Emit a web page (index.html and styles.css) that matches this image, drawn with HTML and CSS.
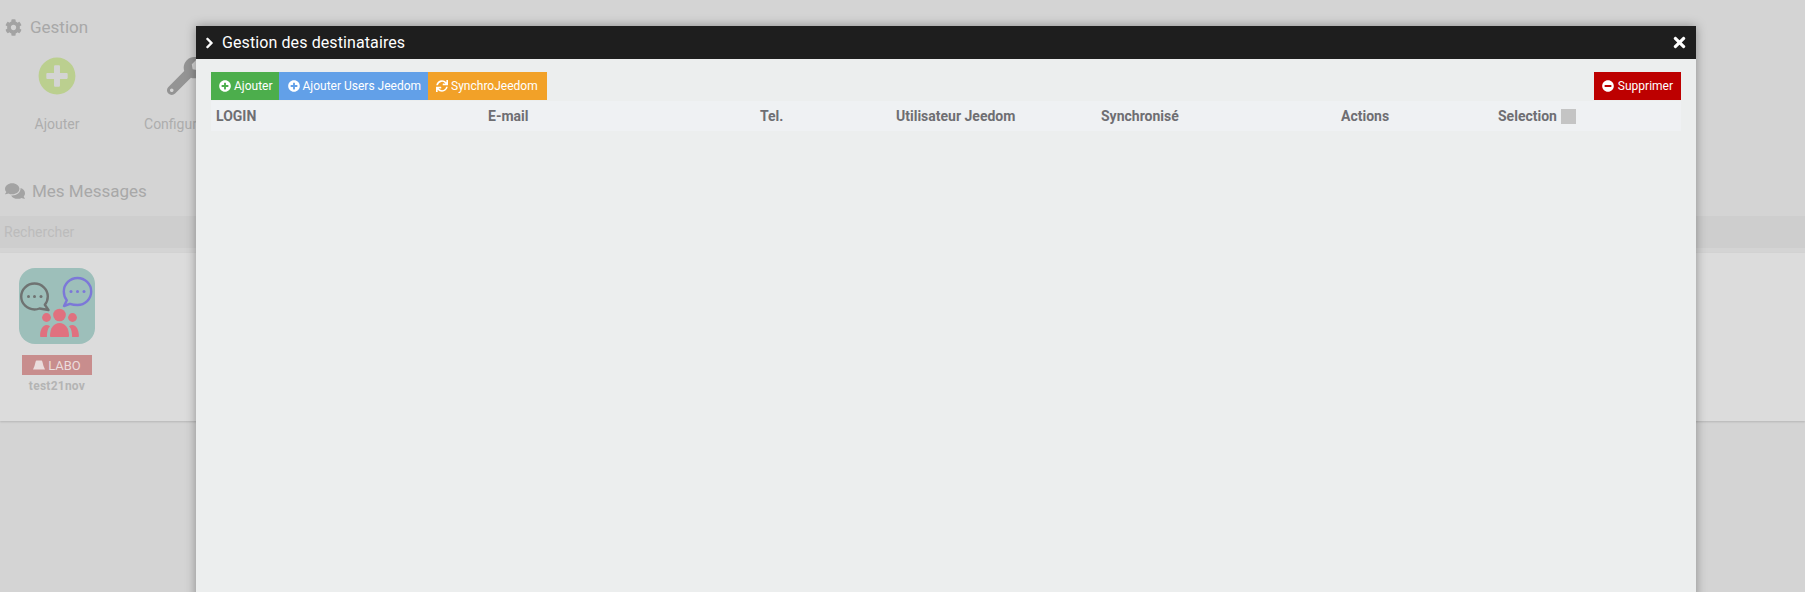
FILE: index.html
```html
<!DOCTYPE html>
<html lang="fr">
<head>
<meta charset="utf-8">
<title>Gestion des destinataires</title>
<link rel="stylesheet" href="styles.css">
</head>
<body>
<main class="page">
  <h3 class="section-title title-gestion">
    <svg class="ico ico-gear" viewBox="0 0 512 512"><path d="M487.4 315.7l-42.6-24.6c4.3-23.2 4.3-47 0-70.2l42.6-24.6c4.9-2.8 7.1-8.6 5.5-14-11.1-35.6-30-67.8-54.7-94.6-3.8-4.1-10-5.1-14.8-2.3L380.8 110c-17.9-15.4-38.5-27.3-60.8-35.1V25.8c0-5.6-3.9-10.5-9.4-11.7-36.7-8.2-74.3-7.8-109.2 0-5.5 1.2-9.4 6.1-9.4 11.7V75c-22.2 7.9-42.8 19.8-60.8 35.1L88.7 85.5c-4.9-2.8-11-1.9-14.8 2.3-24.7 26.7-43.6 58.9-54.7 94.6-1.7 5.4.6 11.2 5.5 14L67.3 221c-4.3 23.2-4.3 47 0 70.2l-42.6 24.6c-4.9 2.8-7.1 8.6-5.5 14 11.1 35.6 30 67.8 54.7 94.6 3.8 4.1 10 5.1 14.8 2.3l42.6-24.6c17.9 15.4 38.5 27.3 60.8 35.1v49.2c0 5.6 3.9 10.5 9.4 11.7 36.7 8.2 74.3 7.8 109.2 0 5.5-1.2 9.4-6.1 9.4-11.7v-49.2c22.2-7.9 42.8-19.8 60.8-35.1l42.6 24.6c4.9 2.8 11 1.9 14.8-2.3 24.7-26.7 43.6-58.9 54.7-94.6 1.5-5.5-.7-11.3-5.6-14.1zM256 336c-44.1 0-80-35.9-80-80s35.9-80 80-80 80 35.9 80 80-35.9 80-80 80z"/></svg>
    Gestion
  </h3>
  <div class="actions">
    <div class="action action-add">
      <svg class="action-icon icon-add" viewBox="0 0 512 512"><path d="M256 8C119 8 8 119 8 256s111 248 248 248 248-111 248-248S393 8 256 8zm144 276c0 6.600-5.400 12-12 12h-92v92c0 6.600-5.400 12-12 12h-56c-6.600 0-12-5.400-12-12v-92h-92c-6.600 0-12-5.400-12-12v-56c0-6.600 5.400-12 12-12h92v-92c0-6.600 5.400-12 12-12h56c6.600 0 12 5.400 12 12v92h92c6.600 0 12 5.400 12 12v56z"/></svg>
      <span>Ajouter</span>
    </div>
    <div class="action action-config">
      <svg class="action-icon icon-config" viewBox="0 0 512 512"><path d="M507.73 109.1c-2.24-9.03-13.54-12.09-20.12-5.51l-74.36 74.36-67.88-11.31-11.31-67.88 74.36-74.36c6.62-6.62 3.43-17.9-5.66-20.16-47.38-11.74-99.55.91-136.58 37.93-39.64 39.64-50.55 97.1-34.05 147.2L18.74 402.76c-24.99 24.99-24.99 65.51 0 90.5 24.99 24.99 65.51 24.99 90.5 0l213.21-213.21c50.12 16.71 107.47 5.68 147.37-34.22 37.07-37.07 49.7-89.32 37.91-136.73zM64 472c-13.25 0-24-10.75-24-24 0-13.26 10.75-24 24-24s24 10.74 24 24c0 13.25-10.75 24-24 24z"/></svg>
      <span>Configuration</span>
    </div>
  </div>
  <h3 class="section-title title-messages">
    <svg class="ico ico-comments" viewBox="0 0 576 512"><path d="M416 192c0-88.4-93.1-160-208-160S0 103.6 0 192c0 34.3 14.1 65.9 38 92-13.4 30.2-35.5 54.2-35.8 54.5-2.2 2.3-2.8 5.7-1.5 8.7S4.8 352 8 352c36.6 0 66.9-12.3 88.7-25 32.2 15.7 70.3 25 111.3 25 114.9 0 208-71.6 208-160zm122 220c23.9-26 38-57.7 38-92 0-66.9-53.5-124.2-129.3-148.1.9 6.6 1.3 13.3 1.3 20.1 0 105.9-107.7 192-240 192-10.8 0-21.3-.8-31.7-1.9C207.8 439.6 281.8 480 368 480c41 0 79.1-9.2 111.3-25 21.8 12.7 52.1 25 88.7 25 3.2 0 6.1-1.9 7.3-4.800 1.3-2.9.7-6.3-1.5-8.7-.3-.3-22.4-24.2-35.8-54.5z"/></svg>
    Mes Messages
  </h3>
  <div class="search">Rechercher</div>
  <div class="cards">
    <div class="card">
      <svg class="card-logo" viewBox="0 0 76 76">
        <rect width="76" height="76" rx="16" fill="#9dbfba"/>
        <g fill="none" stroke-width="2.400" stroke-linejoin="round">
          <path d="M20.500 40.500C18.800 41.200 17.200 41.500 15.500 41.500 8.300 41.500 2.200 35.800 2.200 28.500S8.300 15.500 15.500 15.500 28.800 21.200 28.800 28.500C28.800 31.700 27.700 34.500 25.800 36.800L29.500 42z" stroke="#6f7372"/>
          <path d="M51 35.800C53 36.500 55.800 37 58.500 37 66 37 72.200 31 72.200 23.500S66 10 58.500 10 44.800 16 44.800 23.500C44.800 27 45.800 29.800 47.800 32.200L45 38z" stroke="#7c78d8"/>
        </g>
        <g fill="#6f7372"><circle cx="9.500" cy="28.500" r="1.500"/><circle cx="15.500" cy="28.500" r="1.500"/><circle cx="22" cy="28.500" r="1.500"/></g>
        <g fill="#7c78d8"><circle cx="52" cy="23.500" r="1.500"/><circle cx="58.500" cy="23.500" r="1.500"/><circle cx="65" cy="23.500" r="1.500"/></g>
        <g fill="#e0717f">
          <circle cx="40.500" cy="47" r="6.300"/>
          <circle cx="27.500" cy="49.500" r="4.400"/>
          <circle cx="53.500" cy="49.500" r="4.400"/>
          <path d="M31 68c0-8 4-13 9.500-13S50 60 50 68c0 .5-.5 1-1 1H32c-.5 0-1-.5-1-1z"/>
          <path d="M22 69c-.6 0-.9-.5-.9-1 0-6 2.500-11 6.400-11 1.300 0 2.500.4 3.500 1.200C28.500 60.500 27.900 65 27.900 69z"/>
          <path d="M59 69c.6 0 .9-.5.9-1 0-6-2.500-11-6.400-11-1.300 0-2.500.4-3.500 1.200 2.500 2.300 3.100 6.800 3.100 10.800z"/>
        </g>
      </svg>
      <div class="badge">
        <svg class="badge-icon" viewBox="0 0 12 10"><path d="M4 .5h4c.8 0 1.200.5 1.400 1.200L10.500 6l1.500 3.500H0L1.500 6l1.100-4.300C2.800 1 3.200.5 4 .5z" fill="#eadcdc"/></svg>
        LABO
      </div>
      <div class="card-name">test21nov</div>
    </div>
  </div>
</main>

<section class="modal">
  <header class="modal-head">
    <svg class="head-chevron" viewBox="0 0 320 512"><path d="M285.476 272.971L91.132 467.314c-9.373 9.373-24.569 9.373-33.941 0l-22.667-22.667c-9.357-9.357-9.375-24.522-.04-33.901L188.505 256 34.484 101.255c-9.335-9.379-9.317-24.544.04-33.901l22.667-22.667c9.373-9.373 24.569-9.373 33.941 0L285.475 239.030c9.373 9.372 9.373 24.568.001 33.941z"/></svg>
    <span class="head-title">Gestion des destinataires</span>
    <svg class="head-close" viewBox="0 0 352 512"><path d="M242.720 256l100.070-100.070c12.280-12.280 12.280-32.190 0-44.480l-22.240-22.240c-12.280-12.280-32.190-12.280-44.480 0L176 189.280 75.930 89.210c-12.280-12.280-32.190-12.280-44.480 0L9.210 111.450c-12.280 12.280-12.280 32.190 0 44.480L109.280 256 9.210 356.070c-12.280 12.280-12.280 32.190 0 44.480l22.240 22.240c12.280 12.280 32.200 12.280 44.480 0L176 322.720l100.070 100.070c12.280 12.280 32.200 12.280 44.480 0l22.240-22.240c12.280-12.280 12.280-32.190 0-44.480L242.720 256z"/></svg>
  </header>
  <div class="modal-body">
    <div class="toolbar">
      <a class="btn btn-green">
        <svg class="btn-icon" viewBox="0 0 512 512"><path d="M256 8C119 8 8 119 8 256s111 248 248 248 248-111 248-248S393 8 256 8zm144 276c0 6.600-5.400 12-12 12h-92v92c0 6.600-5.400 12-12 12h-56c-6.600 0-12-5.400-12-12v-92h-92c-6.600 0-12-5.400-12-12v-56c0-6.600 5.400-12 12-12h92v-92c0-6.600 5.400-12 12-12h56c6.600 0 12 5.400 12 12v92h92c6.600 0 12 5.400 12 12v56z"/></svg>Ajouter
      </a>
      <a class="btn btn-blue">
        <svg class="btn-icon" viewBox="0 0 512 512"><path d="M256 8C119 8 8 119 8 256s111 248 248 248 248-111 248-248S393 8 256 8zm144 276c0 6.600-5.400 12-12 12h-92v92c0 6.600-5.400 12-12 12h-56c-6.600 0-12-5.400-12-12v-92h-92c-6.600 0-12-5.400-12-12v-56c0-6.600 5.400-12 12-12h92v-92c0-6.600 5.400-12 12-12h56c6.600 0 12 5.400 12 12v92h92c6.600 0 12 5.400 12 12v56z"/></svg>Ajouter Users Jeedom
      </a>
      <a class="btn btn-orange">
        <svg class="btn-icon" viewBox="0 0 512 512"><path d="M440.650 12.570l4 82.770A247.160 247.160 0 0 0 255.830 8C134.730 8 33.910 94.920 12.290 209.820A12 12 0 0 0 24.090 224h49.050a12 12 0 0 0 11.670-9.260 175.910 175.910 0 0 1 317-56.940l-101.460-4.860a12 12 0 0 0-12.570 12v47.410a12 12 0 0 0 12 12H500a12 12 0 0 0 12-12V12a12 12 0 0 0-12-12h-47.370a12 12 0 0 0-11.980 12.570zM255.830 432a175.610 175.610 0 0 1-146-77.800l101.800 4.870a12 12 0 0 0 12.570-12v-47.400a12 12 0 0 0-12-12H12a12 12 0 0 0-12 12V500a12 12 0 0 0 12 12h47.350a12 12 0 0 0 12-12.600l-4.150-82.570A247.170 247.170 0 0 0 255.830 504c121.110 0 221.930-86.920 243.550-201.820a12 12 0 0 0-11.800-14.180h-49.050a12 12 0 0 0-11.670 9.260A175.860 175.860 0 0 1 255.830 432z"/></svg>SynchroJeedom
      </a>
      <a class="btn btn-red">
        <svg class="btn-icon" viewBox="0 0 512 512"><path d="M256 8C119 8 8 119 8 256s111 248 248 248 248-111 248-248S393 8 256 8zM124 296c-6.600 0-12-5.400-12-12v-56c0-6.600 5.400-12 12-12h264c6.600 0 12 5.400 12 12v56c0 6.600-5.400 12-12 12H124z"/></svg>Supprimer
      </a>
    </div>
    <table class="grid">
      <thead>
        <tr>
          <th class="col-login">LOGIN</th>
          <th class="col-mail">E-mail</th>
          <th class="col-tel">Tel.</th>
          <th class="col-user">Utilisateur Jeedom</th>
          <th class="col-sync">Synchronisé</th>
          <th class="col-actions">Actions</th>
          <th class="col-select">Selection <span class="check"></span></th>
        </tr>
      </thead>
    </table>
  </div>
</section>
</body>
</html>
```
FILE: styles.css
```css
* { box-sizing: border-box; }
html, body { margin: 0; height: 592px; overflow: hidden; }
body {
  background: #d4d4d4;
  font-family: Roboto, "Liberation Sans", sans-serif;
  position: relative;
}
.page { height: 592px; color: #adadad; display: flex; flex-direction: column; }
.section-title {
  margin: 0;
  font-weight: 400;
  font-size: 17px;
  line-height: 20px;
  color: #a8a8a8;
  display: flex;
  align-items: center;
  padding-left: 5px;
}
.title-gestion { margin-top: 17px; gap: 8px; }
.title-messages { margin-top: 53px; gap: 7px; }
.ico { fill: #a3a3a3; display: block; }
.ico-gear { width: 17px; height: 17px; }
.ico-comments { width: 20px; height: 18px; }
.actions { display: flex; margin-top: 20px; height: 71px; }
.action {
  display: flex;
  flex-direction: column;
  align-items: center;
  font-size: 14px;
  color: #adadad;
}
.action-add { width: 114px; }
.action-config { width: 120px; margin-left: 12px; }
.action-icon { display: block; flex: none; width: 38px; height: 38px; margin-bottom: 21px; }
.icon-add { fill: #bbcf8f; }
.icon-config { fill: #949494; }
.search {
  margin-top: 15px;
  height: 32px;
  background: #cecece;
  font-size: 14px;
  line-height: 32px;
  padding-left: 4px;
  color: #bcbcbc;
}
.cards {
  margin-top: 5px;
  height: 168px;
  background: #dcdcdc;
  box-shadow: 0 1px 2px rgba(0, 0, 0, .15);
  padding: 15px 19px 0;
}
.card { width: 76px; display: flex; flex-direction: column; align-items: center; }
.card-logo { display: block; width: 76px; height: 76px; }
.badge {
  margin-top: 11px;
  width: 70px;
  height: 20px;
  background: #c88d8d;
  color: #ebdcdc;
  font-size: 13px;
  display: flex;
  align-items: center;
  justify-content: center;
  gap: 3px;
}
.badge-icon { width: 12px; height: 10px; display: block; }
.card-name { margin-top: 3px; font-size: 12px; line-height: 16px; font-weight: 700; letter-spacing: .25px; color: #b4b4b4; white-space: nowrap; }

.modal {
  position: absolute;
  left: 196px;
  top: 26px;
  width: 1500px;
  height: 600px;
  background: #eceeee;
  box-shadow: 0 0 10px rgba(0, 0, 0, .35);
}
.modal-head {
  height: 33px;
  background: #1e1e1e;
  color: #fff;
  display: flex;
  align-items: center;
  padding: 0 10px 0 9px;
}
.head-chevron { width: 9px; height: 12px; fill: #fff; stroke: #fff; stroke-width: 24px; display: block; margin-right: 8px; }
.head-title { font-size: 16px; font-weight: 400; flex: 1; letter-spacing: .1px; }
.head-close { width: 13px; height: 17px; fill: #fff; display: block; }
.modal-body { padding: 13px 15px 0; }
.toolbar { display: flex; height: 28px; }
.btn {
  display: flex;
  align-items: center;
  height: 28px;
  padding: 0 6px 0 8px;
  font-size: 12px;
  color: #fff;
  white-space: nowrap;
}
.btn-icon { width: 12px; height: 12px; fill: #fff; display: block; margin-right: 3px; }
.btn-green { background: #4cae4c; }
.btn-blue { background: #62a0e8; padding: 0 7px 0 9px; }
.btn-orange { background: #f2a128; padding-right: 9px; }
.btn-red { background: #bd0000; margin-left: auto; padding-right: 8px; }
.btn-red .btn-icon { margin-right: 4px; }
.grid {
  width: 1470px;
  table-layout: fixed;
  border-collapse: collapse;
  margin-top: 1px;
  background: #eff1f3;
}
.grid th {
  height: 30px;
  padding: 0 5px;
  text-align: left;
  font-size: 14px;
  font-weight: 700;
  color: #6e6e72;
  white-space: nowrap;
}
.col-login { width: 272px; }
.col-mail { width: 272px; }
.col-tel { width: 136px; }
.col-user { width: 205px; }
.col-sync { width: 240px; }
.col-actions { width: 157px; }
.check {
  display: inline-block;
  width: 15px;
  height: 15px;
  background: #c4c4c4;
  vertical-align: -3px;
  margin-left: 1px;
}
```
